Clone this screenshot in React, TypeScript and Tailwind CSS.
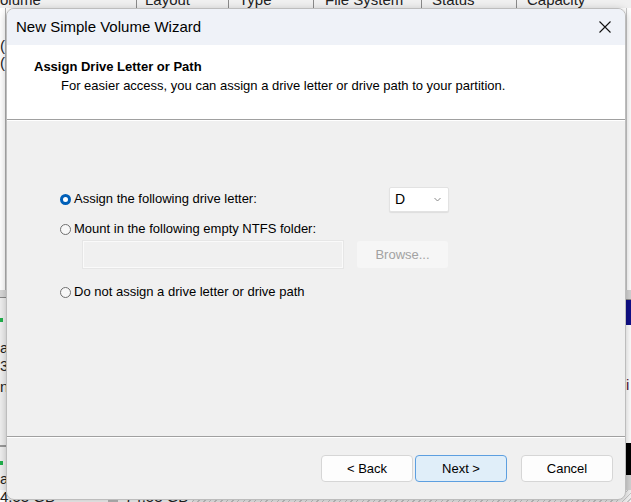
import React from "react";

const font = { fontFamily: '"Liberation Sans", Arial, sans-serif' };

function Radio({ checked }: { checked?: boolean }) {
  return checked ? (
    <span className="inline-block w-[11px] h-[11px] rounded-full border-[3px] border-[#005fb8] bg-white shrink-0" />
  ) : (
    <span className="inline-block w-[11px] h-[11px] rounded-full border border-[#6f6f6f] bg-[#f7f7f7] shrink-0" />
  );
}

function Btn({ children, primary }: { children: React.ReactNode; primary?: boolean }) {
  return (
    <div
      className={
        "h-[27px] flex items-center justify-center rounded-[4px] border text-[13px] text-black " +
        (primary
          ? "w-[92px] bg-[#e0eef9] border-[#5d9fe0]"
          : "w-[92px] bg-[#fdfdfd] border-[#d6d6d6]")
      }
    >
      {children}
    </div>
  );
}

export default function App() {
  return (
    <div className="relative w-[631px] h-[502px] overflow-hidden bg-white" style={font}>
      {/* Background: Disk Management */}
      <div className="flex flex-col w-full h-full">
        <div className="h-[8px] flex bg-[#f0f0f0] overflow-hidden text-[15px] text-[#222] leading-[15px]">
          <div className="w-[137px] border-r border-[#8a8a8a] pl-0 -mt-[8px]">olume</div>
          <div className="w-[92px] border-r border-[#8a8a8a] pl-[8px] -mt-[8px]">Layout</div>
          <div className="w-[85px] border-r border-[#8a8a8a] pl-[10px] -mt-[8px]">Type</div>
          <div className="w-[108px] border-r border-[#8a8a8a] pl-[11px] -mt-[8px]">File System</div>
          <div className="w-[95px] border-r border-[#8a8a8a] pl-[10px] -mt-[8px]">Status</div>
          <div className="flex-1 pl-[10px] -mt-[8px]">Capacity</div>
        </div>
        <div className="flex-1 flex">
          <div className="w-[6px] flex flex-col text-[15px] leading-[15px] text-[#222] overflow-hidden">
            <div className="h-[282px] bg-white border-r border-[#b0b0b0] pt-[30px] flex flex-col gap-[2px]">
              <span>(</span>
              <span>(</span>
            </div>
            <div className="h-[8px] bg-[#d8d8d8] border-b border-[#8a8a8a]" />
            <div className="h-[147px] bg-[#f0f0f0] flex flex-col pt-[20px]">
              <span className="h-[4px] w-[3px] bg-[#22b14c] mb-[18px]" />
              <span className="mb-[3px]">as</span>
              <span className="mb-[6px]">38</span>
              <span>n</span>
            </div>
            <div className="h-[2px] bg-[#9a9a9a]" />
            <div className="flex-1 bg-[#f0f0f0] flex flex-col pt-[14px]">
              <span className="h-[4px] w-[3px] bg-[#22b14c] mb-[6px]" />
              <span>as</span>
            </div>
          </div>
          <div className="flex-1" />
          <div className="w-[5px] flex flex-col text-[15px] leading-[15px] overflow-hidden">
            <div className="h-[282px] bg-white border-l border-[#c8c8c8]" />
            <div className="h-[10px] bg-[#d4d4d4] border-b border-[#8a8a8a]" />
            <div className="h-[25px] bg-[#10108a]" />
            <div className="h-[118px] bg-white pt-[52px] text-[#5a1a3a]">i</div>
            <div className="h-[32px] bg-black" />
            <div className="flex-1 bg-[#d4d4d4]" />
          </div>
        </div>
        <div className="h-[12px] flex text-[15px] leading-[15px] text-[#222] overflow-hidden">
          <div className="w-[108px] bg-white -mt-[1px] pl-0">4.53 GB</div>
          <div className="w-[10px] bg-[#c0c0c0]" />
          <div className="w-[74px] bg-white pl-[7px] -mt-[1px]">74.53 GB</div>
          <div
            className="flex-1"
            style={{
              backgroundImage:
                "repeating-linear-gradient(135deg, #c8c8c8 0 1px, #f4f4f4 1px 4px)",
            }}
          />
        </div>
      </div>

      {/* Dialog window */}
      <div className="absolute left-[6px] top-[8px] w-[620px] h-[492px] rounded-[8px] border border-[#bdbdbd] overflow-hidden flex flex-col shadow-[0_2px_8px_rgba(0,0,0,0.25)] bg-[#f0f0f0]">
        <div className="h-[36px] bg-[#eff2f8] flex items-center justify-between pl-[9px] pr-[14px] shrink-0">
          <span className="text-[15px] text-black">New Simple Volume Wizard</span>
          <svg width="12" height="12" viewBox="0 0 12 12">
            <path d="M0.5 0.5 L11.5 11.5 M11.5 0.5 L0.5 11.5" stroke="#111" strokeWidth="1.1" fill="none" />
          </svg>
        </div>
        <div className="h-[74px] bg-white flex flex-col pl-[27px] pt-[14px] shrink-0">
          <div className="text-[13px] font-bold text-black leading-[16px]">Assign Drive Letter or Path</div>
          <div className="text-[13px] text-black leading-[16px] pl-[27px] mt-[3px]">
            For easier access, you can assign a drive letter or drive path to your partition.
          </div>
        </div>
        <div className="h-px bg-[#a0a0a0] shrink-0" />
        <div className="h-px bg-white shrink-0" />
        <div className="flex-1 flex flex-col pl-[53px] pt-[65px] text-[13px] text-black">
          <div className="flex items-center h-[26px]">
            <Radio checked />
            <span className="ml-[3px] w-[315px]">Assign the following drive letter:</span>
            <div className="w-[60px] h-[25px] bg-white border border-[#e2e2e2] rounded-[2px] shadow-[0_1px_1px_rgba(0,0,0,0.08)] flex items-center justify-between pl-[5px] pr-[7px]">
              <span className="text-[14px]">D</span>
              <svg width="7" height="5" viewBox="0 0 7 5">
                <path d="M0.5 1 L3.5 4 L6.5 1" stroke="#8a8a8a" strokeWidth="1" fill="none" />
              </svg>
            </div>
          </div>
          <div className="flex items-center h-[16px] mt-[9px]">
            <Radio />
            <span className="ml-[3px]">Mount in the following empty NTFS folder:</span>
          </div>
          <div className="flex mt-[4px] ml-[23px] gap-[14px]">
            <div className="w-[260px] h-[27px] bg-[#f0f0f0] border border-[#fafafa] shadow-[0_0_0_1px_#e6e6e6]" />
            <div className="w-[91px] h-[27px] bg-[#f6f6f6] rounded-[3px] flex items-center justify-center text-[#a2a2a2]">
              Browse...
            </div>
          </div>
          <div className="flex items-center h-[16px] mt-[16px]">
            <Radio />
            <span className="ml-[3px]">Do not assign a drive letter or drive path</span>
          </div>
        </div>
        <div className="h-px bg-[#a0a0a0] shrink-0" />
        <div className="h-px bg-white shrink-0" />
        <div className="h-[61px] shrink-0 flex items-start justify-end pr-[12px] pt-[17px] text-[13px]">
          <Btn>&lt; Back</Btn>
          <div className="w-[2px]" />
          <Btn primary>Next &gt;</Btn>
          <div className="w-[14px]" />
          <Btn>Cancel</Btn>
        </div>
      </div>
    </div>
  );
}
